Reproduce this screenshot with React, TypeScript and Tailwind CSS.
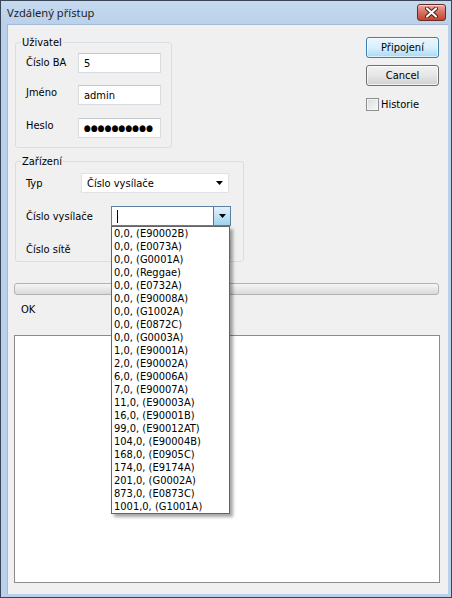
import React from "react";

const items = [
  "0,0, (E90002B)",
  "0,0, (E0073A)",
  "0,0, (G0001A)",
  "0,0, (Reggae)",
  "0,0, (E0732A)",
  "0,0, (E90008A)",
  "0,0, (G1002A)",
  "0,0, (E0872C)",
  "0,0, (G0003A)",
  "1,0, (E90001A)",
  "2,0, (E90002A)",
  "6,0, (E90006A)",
  "7,0, (E90007A)",
  "11,0, (E90003A)",
  "16,0, (E90001B)",
  "99,0, (E90012AT)",
  "104,0, (E90004B)",
  "168,0, (E0905C)",
  "174,0, (E9174A)",
  "201,0, (G0002A)",
  "873,0, (E0873C)",
  "1001,0, (G1001A)",
];

function Arrow() {
  return (
    <svg width="7" height="4" viewBox="0 0 7 4">
      <path d="M0 0h7L3.5 4z" fill="#000" />
    </svg>
  );
}

function TextBox({ value, password }: { value: string; password?: boolean }) {
  return (
    <div className="flex h-[20px] w-[83px] items-center border border-[#d8dbe1] border-t-[#c4c8cf] bg-white pl-[5px] leading-[13px]">
      {password ? <span className="text-[8.8px] tracking-[0px]">{value}</span> : value}
    </div>
  );
}

export default function App() {
  return (
    <div className="flex h-[598px] w-[452px] flex-col border border-[#3a4658] bg-[#b9d1ea] font-['DejaVu_Sans_Condensed','Liberation_Sans',sans-serif] text-[11px] leading-[13px] text-black">
      {/* title bar */}
      <div className="flex h-[23px] items-start bg-gradient-to-b from-[#c6daef] to-[#b9d1ea]">
        <span className="mt-[4px] ml-[6px] font-['Noto_Sans','Open_Sans',sans-serif] text-[11.2px] leading-[16px] text-[#1e1e1e]">
          Vzdálený přístup
        </span>
        <div className="mt-[3px] mr-[5px] ml-auto flex h-[17px] w-[29px] items-center justify-center rounded-[3px] border border-[#6b2b22] bg-gradient-to-b from-[#e9a99c] via-[#d4705f] to-[#c4422c] shadow-[inset_0_1px_0_rgba(255,255,255,0.5)]">
          <svg width="13" height="11" viewBox="0 0 13 11">
            <path d="M2 1.5l9 8M11 1.5l-9 8" stroke="#4a1a12" strokeWidth="4" strokeLinecap="round" />
            <path d="M2 1.5l9 8M11 1.5l-9 8" stroke="#fff" strokeWidth="2.2" strokeLinecap="round" />
          </svg>
        </div>
      </div>

      {/* frame around client area */}
      <div className="flex flex-1 flex-col pl-[6px] pr-[3px] pb-[3px]">
        <div className="flex flex-1 flex-col border-l border-t border-[#a4bad4] bg-[#f0f0f0]">
          <div className="flex">
            <div className="ml-[7px] flex w-[229px] flex-col">
              <fieldset className="mt-[11px] w-[157px] rounded-[3px] border border-[#d5dfe5] pb-[9px]">
                <legend className="ml-[5px] px-[1px]">Uživatel</legend>
                <div className="flex flex-col gap-[12px] pt-[4px] pl-[10px]">
                  <div className="flex items-start">
                    <span className="mt-[3px] w-[52px]">Číslo BA</span>
                    <TextBox value="5" />
                  </div>
                  <div className="flex items-start">
                    <span className="mt-[1px] w-[52px]">Jméno</span>
                    <TextBox value="admin" />
                  </div>
                  <div className="mt-[1px] flex items-start">
                    <span className="mt-[1px] w-[52px]">Heslo</span>
                    <TextBox value="●●●●●●●●●●" password />
                  </div>
                </div>
              </fieldset>

              <fieldset className="mt-[7px] w-[229px] rounded-[3px] border border-[#d5dfe5] pb-[2px]">
                <legend className="ml-[5px] px-[1px]">Zařízení</legend>
                <div className="flex flex-col gap-[13px] pt-[5px] pl-[10px]">
                  <div className="flex items-center">
                    <span className="w-[55px]">Typ</span>
                    <div className="flex h-[20px] w-[148px] items-center justify-between border border-[#e0e2e6] bg-white pr-[5px] pl-[5px]">
                      <span>Číslo vysílače</span>
                      <Arrow />
                    </div>
                  </div>
                  <div className="flex items-center">
                    <span className="w-[85px]">Číslo vysílače</span>
                    <div className="relative z-10">
                      <div className="flex h-[20px] w-[120px] items-center border border-[#5c7fa4] bg-white">
                        <span className="ml-[5px] h-[13px] w-px bg-black" />
                        <div className="ml-auto flex h-[18px] w-[17px] items-center justify-center border-l border-[#3c7fb1] bg-gradient-to-b from-[#e3f2fb] via-[#c2e2f6] to-[#9fd2f1]">
                          <Arrow />
                        </div>
                      </div>
                      <div className="absolute top-[20px] left-0 w-[119px] border border-[#646464] bg-white pl-[2px] shadow-[3px_3px_3px_rgba(0,0,0,0.35)]">
                        {items.map((item) => (
                          <div key={item} className="h-[13px] leading-[13px] whitespace-nowrap">
                            {item}
                          </div>
                        ))}
                      </div>
                    </div>
                  </div>
                  <div className="flex items-center">
                    <span className="w-[85px]">Číslo sítě</span>
                    <div className="h-[20px] w-[120px] border border-[#d8dbe1] bg-white" />
                  </div>
                </div>
              </fieldset>
            </div>

            <div className="mt-[12px] mr-[9px] ml-auto flex w-[73px] flex-col">
              <button className="h-[21px] w-[73px] rounded-[3px] border border-[#3c7fb1] bg-gradient-to-b from-[#eaf6fd] via-[#d9f0fc] to-[#a7d9f5] shadow-[inset_0_0_0_1px_rgba(255,255,255,0.6)]">
                Připojení
              </button>
              <button className="mt-[7px] h-[21px] w-[73px] rounded-[3px] border border-[#707070] bg-gradient-to-b from-[#f2f2f2] via-[#e6e6e6] to-[#d0d0d0] shadow-[inset_0_0_0_1px_rgba(255,255,255,0.7)]">
                Cancel
              </button>
              <label className="mt-[12px] flex items-center gap-[2px]">
                <span className="h-[13px] w-[13px] border border-[#8e8f8f] bg-gradient-to-br from-[#dcdcdc] to-[#f8f8f8] shadow-[inset_0_0_0_1px_#f4f4f4]" />
                <span>Historie</span>
              </label>
            </div>
          </div>

          <div className="mt-[21px] ml-[6px] h-[12px] w-[425px] rounded-[3px] border border-[#b2b2b2] bg-gradient-to-b from-[#f6f6f6] via-[#e8e8e8] to-[#d9d9d9]" />

          <div className="mt-[8px] ml-[13px]">OK</div>

          <div className="mt-[19px] ml-[6px] h-[248px] w-[426px] border border-[#8b8b8b] bg-white" />
        </div>
      </div>
    </div>
  );
}
